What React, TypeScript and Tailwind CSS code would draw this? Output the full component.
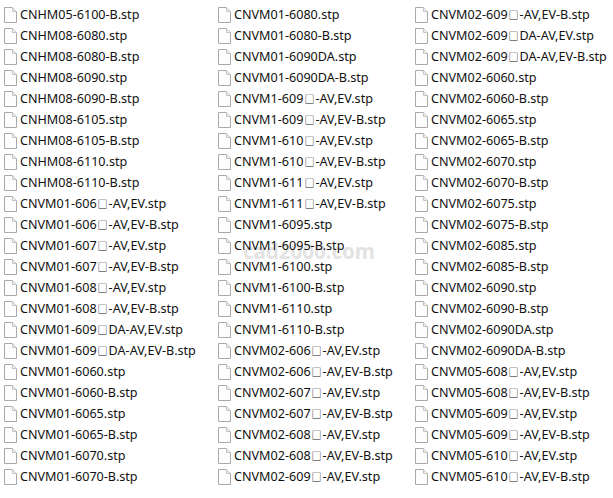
const col1 = [
  "CNHM05-6100-B.stp", "CNHM08-6080.stp", "CNHM08-6080-B.stp", "CNHM08-6090.stp", "CNHM08-6090-B.stp",
  "CNHM08-6105.stp", "CNHM08-6105-B.stp", "CNHM08-6110.stp", "CNHM08-6110-B.stp",
  "CNVM01-606□-AV,EV.stp", "CNVM01-606□-AV,EV-B.stp", "CNVM01-607□-AV,EV.stp", "CNVM01-607□-AV,EV-B.stp",
  "CNVM01-608□-AV,EV.stp", "CNVM01-608□-AV,EV-B.stp", "CNVM01-609□DA-AV,EV.stp", "CNVM01-609□DA-AV,EV-B.stp",
  "CNVM01-6060.stp", "CNVM01-6060-B.stp", "CNVM01-6065.stp", "CNVM01-6065-B.stp", "CNVM01-6070.stp", "CNVM01-6070-B.stp",
];
const col2 = [
  "CNVM01-6080.stp", "CNVM01-6080-B.stp", "CNVM01-6090DA.stp", "CNVM01-6090DA-B.stp",
  "CNVM1-609□-AV,EV.stp", "CNVM1-609□-AV,EV-B.stp", "CNVM1-610□-AV,EV.stp", "CNVM1-610□-AV,EV-B.stp",
  "CNVM1-611□-AV,EV.stp", "CNVM1-611□-AV,EV-B.stp", "CNVM1-6095.stp", "CNVM1-6095-B.stp",
  "CNVM1-6100.stp", "CNVM1-6100-B.stp", "CNVM1-6110.stp", "CNVM1-6110-B.stp",
  "CNVM02-606□-AV,EV.stp", "CNVM02-606□-AV,EV-B.stp", "CNVM02-607□-AV,EV.stp", "CNVM02-607□-AV,EV-B.stp",
  "CNVM02-608□-AV,EV.stp", "CNVM02-608□-AV,EV-B.stp", "CNVM02-609□-AV,EV.stp",
];
const col3 = [
  "CNVM02-609□-AV,EV-B.stp", "CNVM02-609□DA-AV,EV.stp", "CNVM02-609□DA-AV,EV-B.stp",
  "CNVM02-6060.stp", "CNVM02-6060-B.stp", "CNVM02-6065.stp", "CNVM02-6065-B.stp", "CNVM02-6070.stp", "CNVM02-6070-B.stp",
  "CNVM02-6075.stp", "CNVM02-6075-B.stp", "CNVM02-6085.stp", "CNVM02-6085-B.stp", "CNVM02-6090.stp", "CNVM02-6090-B.stp",
  "CNVM02-6090DA.stp", "CNVM02-6090DA-B.stp",
  "CNVM05-608□-AV,EV.stp", "CNVM05-608□-AV,EV-B.stp", "CNVM05-609□-AV,EV.stp", "CNVM05-609□-AV,EV-B.stp",
  "CNVM05-610□-AV,EV.stp", "CNVM05-610□-AV,EV-B.stp",
];

function FileIcon() {
  return (
    <svg width="13" height="16" viewBox="0 0 13 16" className="shrink-0 mb-px">
      <path d="M0.5 0.5H8.5L12.5 4.5V15.5H0.5Z" fill="#fdfdfd" stroke="#a9a9a9" />
      <path d="M8.5 0.5V4.5H12.5" fill="#efefef" stroke="#c4c4c4" />
    </svg>
  );
}

// the placeholder box in the names is smaller than the letters
function FileName({ name }: { name: string }) {
  const [before, after] = name.split("□");
  return (
    <span className="whitespace-nowrap text-[12.6px] text-[#111111]">
      {before}
      {after !== undefined && <span className="text-[10px] px-px">□</span>}
      {after}
    </span>
  );
}

function FileColumn({ files, width }: { files: string[]; width: string }) {
  return (
    <div className={`flex flex-col ${width}`}>
      {files.map((name) => (
        <div key={name} className="flex items-center h-[21px] gap-[3px]">
          <FileIcon />
          <FileName name={name} />
        </div>
      ))}
    </div>
  );
}

export default function App() {
  return (
    <div className="relative w-[613px] h-[498px] bg-white overflow-hidden font-['Noto_Sans','Noto_Sans_CJK_SC',sans-serif]">
      <div className="absolute z-0 left-[243px] top-[236px] text-[20.5px] font-bold text-[#e3e3e3] whitespace-nowrap">
        cad2000.com
      </div>
      <div className="relative z-10 flex pl-1 pt-[5px]">
        <FileColumn files={col1} width="w-[214px]" />
        <FileColumn files={col2} width="w-[197px]" />
        <FileColumn files={col3} width="w-[190px]" />
      </div>
    </div>
  );
}
